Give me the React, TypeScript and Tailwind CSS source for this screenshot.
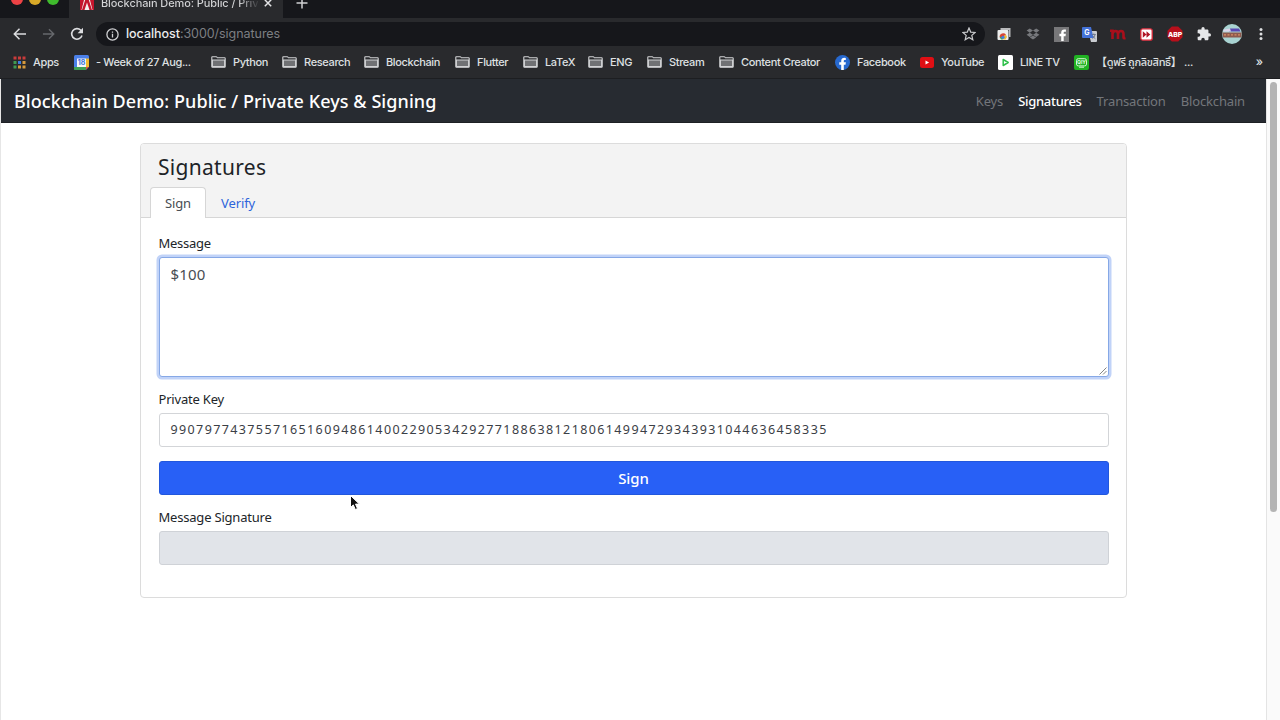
import React from 'react';
import { clsx } from 'clsx';

interface Bookmark {
  label: string;
  width: string;
  icon: React.ReactNode;
}

const FolderIcon = () => (
  <svg viewBox="0 0 15 12" className="h-3 w-[15px]" fill="none" stroke="#d2d3d5" strokeWidth="1.1">
    <path d="M.8 10.4V1.4q0-.6.6-.6h3.8q.5 0 .8.5l.4.5h7.2q.6 0 .6.6v8q0 .8-.8.8H1.6q-.8 0-.8-.8Z" />
    <path d="M1.4 4h12.2v6.6H1.4Z" fill="#707174" />
  </svg>
);

const AppsIcon = () => (
  <svg viewBox="0 0 13 13" className="h-[13px] w-[13px]">
    <path fill="#c93b3b" d="M.5.5h3v3h-3zM5 .5h3v3H5zM9.500.5h3v3h-3z" />
    <path fill="#3f9b52" d="M.5 5h3v3h-3zM.5 9.500h3v3h-3z" />
    <path fill="#3d7be0" d="M5 5h3v3H5z" />
    <path fill="#d79a3c" d="M9.500 5h3v3h-3zM5 9.500h3v3H5zM9.500 9.500h3v3h-3z" />
  </svg>
);

const CalendarIcon = () => (
  <svg viewBox="0 0 15 15" className="h-[15px] w-[15px]">
    <rect width="15" height="15" rx="1.500" fill="#4b80e8" />
    <path fill="#f2b92f" d="M12 3.500h3V12h-3z" />
    <path fill="#3fa055" d="M0 12h12v3H1.500Q0 15 0 13.500z" />
    <path fill="#d85140" d="M12 12h3l-3 3z" />
    <path fill="#292a2d" d="M15 12v3h-3z" />
    <path fill="#f5f7fb" d="M3 3.500h9V12H3z" />
    <text x="7.500" y="10.400" textAnchor="middle" fontSize="7" fontWeight="700" fill="#3b72d8" fontFamily="Inter, sans-serif">18</text>
  </svg>
);

const FacebookIcon = () => (
  <svg viewBox="0 0 15 15" className="h-[15px] w-[15px]">
    <circle cx="7.500" cy="7.500" r="7.500" fill="#2769cf" />
    <path fill="#fff" d="M6.200 15V9.800H4.300V7.300h1.900V6c0-2.200 1.300-3.200 3.100-3.200l1.500.1v2.200h-.9c-.9 0-1.100.4-1.100 1v1.200h2.100l-.4 2.500H8.800V15z" />
  </svg>
);

const YoutubeIcon = () => (
  <svg viewBox="0 0 14 11" className="h-[11px] w-[14px]">
    <rect width="14" height="11" rx="2.500" fill="#e00f14" />
    <path fill="#fff" d="M5.500 3.500v4l3.600-2z" />
  </svg>
);

const LineTvIcon = () => (
  <svg viewBox="0 0 15 15" className="h-[15px] w-[15px]">
    <rect width="15" height="15" rx="1.500" fill="#fff" />
    <path d="M5.200 4.500v6l5-3z" fill="none" stroke="#2fc04a" strokeWidth="1.500" strokeLinejoin="round" />
  </svg>
);

const IqiyiIcon = () => (
  <svg viewBox="0 0 15 15" className="h-[15px] w-[15px]">
    <rect width="15" height="15" rx="2" fill="#20b322" />
    <rect x="2.500" y="3.700" width="10" height="7.200" rx="1.800" fill="none" stroke="#d6f5d4" strokeWidth="1" />
    <text x="7.500" y="9.200" textAnchor="middle" fontSize="5" fontWeight="700" fill="#e4fbe3" fontFamily="Inter, sans-serif">QIY</text>
    <path stroke="#d6f5d4" d="M5 12.200h5" />
  </svg>
);

const bookmarks: Bookmark[] = [
  { label: 'Apps', width: 'w-[61px]', icon: <AppsIcon /> },
  { label: '- Week of 27 Aug...', width: 'w-[137px]', icon: <CalendarIcon /> },
  { label: 'Python', width: 'w-[71px]', icon: <FolderIcon /> },
  { label: 'Research', width: 'w-[82px]', icon: <FolderIcon /> },
  { label: 'Blockchain', width: 'w-[91px]', icon: <FolderIcon /> },
  { label: 'Flutter', width: 'w-[68px]', icon: <FolderIcon /> },
  { label: 'LaTeX', width: 'w-[65px]', icon: <FolderIcon /> },
  { label: 'ENG', width: 'w-[59px]', icon: <FolderIcon /> },
  { label: 'Stream', width: 'w-[72px]', icon: <FolderIcon /> },
  { label: 'Content Creator', width: 'w-[116px]', icon: <FolderIcon /> },
  { label: 'Facebook', width: 'w-[85px]', icon: <FacebookIcon /> },
  { label: 'YouTube', width: 'w-[78px]', icon: <YoutubeIcon /> },
  { label: 'LINE TV', width: 'w-[76px]', icon: <LineTvIcon /> },
  { label: '【ดูฟรี ถูกลิขสิทธิ์】 ...', width: 'w-[130px]', icon: <IqiyiIcon /> },
];

const TabStrip = () => (
  <div className="flex h-[18px] bg-[#16171b]">
    <div className="flex w-[69px] gap-[6px] rounded-br-md pl-[11px]">
      <span className="-mt-[7px] h-3 w-3 rounded-full bg-[#ed4245]" />
      <span className="-mt-[7px] h-3 w-3 rounded-full bg-[#d8a928]" />
      <span className="-mt-[7px] h-3 w-3 rounded-full bg-[#3fbb2d]" />
    </div>
    <div className="flex w-[214px] bg-[#292a2d] pl-[11px]">
      <svg viewBox="0 0 14 14" className="-mt-1 h-[14px] w-[14px] shrink-0">
        <rect width="14" height="14" fill="#f3eeee" />
        <path fill="#c4152d" d="M0 0h5L1.500 14H0zM9 0h5v14h-1.500zM5.500 3h3l3.500 11H9.500L7 6.500 4.500 14H2z" />
      </svg>
      <span className="-mt-[5px] ml-[7px] h-4 w-[157px] shrink-0 overflow-hidden bg-gradient-to-r from-[#d5d6d8] from-88% to-[#3a3b3e] bg-clip-text text-[11px] leading-4 font-medium tracking-[-0.100px] whitespace-nowrap text-transparent">
        Blockchain Demo: Public / Priv
      </span>
      <svg viewBox="0 0 8 8" className="-mt-px ml-[6px] h-2 w-2" stroke="#e4e5e7" strokeWidth="1.500">
        <path d="M.8.8l6.400 6.400M7.200.8.800 7.200" />
      </svg>
    </div>
    <svg viewBox="0 0 12 12" className="-mt-[3px] ml-[13px] h-3 w-3" stroke="#d0d1d3" strokeWidth="1.500">
      <path d="M6 .5v11M.5 6h11" />
    </svg>
  </div>
);

const Extensions = () => (
  <div className="grid w-[285px] grid-cols-10 place-items-center">
    <svg viewBox="0 0 14 14" className="h-[14px] w-[14px]">
      <path fill="#b9babc" d="M3.500 1h10v9H12V3H3.500z" />
      <rect x=".5" y="3" width="11" height="10" rx="1" fill="#eceded" />
      <path fill="#d64534" d="M2.500 10a3.700 3.700 0 0 1 6.500-2.500L6 10z" />
      <path fill="#45a156" d="M2.500 10l1.500 2.500H6V10z" />
      <path fill="#f0bb35" d="M8.800 7.500L10 10l-1.500 2.500H6V10z" />
      <circle cx="6" cy="10.300" r="1.600" fill="#3f7be0" />
    </svg>
    <svg viewBox="0 0 14 12" className="h-3 w-[14px]" fill="#77797d">
      <path d="M3.800.5 7 2.600 3.800 4.700.6 2.600zM10.200.5l3.200 2.100-3.200 2.100L7 2.600zM3.800 4.700 7 6.800 3.800 8.900.6 6.800zM10.200 4.700l3.200 2.100-3.200 2.100L7 6.800zM3.800 9.500 7 7.500l3.200 2L7 11.500z" />
    </svg>
    <svg viewBox="0 0 15 15" className="h-[15px] w-[15px]">
      <rect width="15" height="15" fill="#777779" />
      <path fill="#fff" d="M7.200 14V9.200H5.400V6.700h1.800V5.500c0-2.100 1.200-3.100 3-3.100h1.700v2.300h-1.100c-.9 0-1.100.4-1.100 1v1h2.200l-.4 2.500H9.700V14z" />
    </svg>
    <svg viewBox="0 0 15 15" className="h-[15px] w-[15px]">
      <path fill="#c9ccd1" d="M6 4h8q1 0 1 1v9q0 1-1 1H9z" />
      <path fill="#4472d8" d="M1 0h8l2.500 11H1q-1 0-1-1V1q0-1 1-1z" />
      <text x="4.800" y="8" textAnchor="middle" fontSize="7" fontWeight="700" fill="#fff" fontFamily="Inter, sans-serif">G</text>
      <path d="M9.800 7.500h4M11.800 6.500v1M13 7.700q-.6 2.800-2.600 4M11 9q.8 1.800 2.400 2.800" stroke="#68758b" strokeWidth=".9" fill="none" />
    </svg>
    <svg viewBox="0 0 16 11" className="h-[11px] w-4" fill="none" stroke="#a80f1b" strokeWidth="2.600">
      <path d="M0 1.800h2.500V10M2.500 5Q3 2 5.500 2T8 5v5M8 5q.5-3 3-3t2.500 3v3.500q0 1 2 .5" />
    </svg>
    <svg viewBox="0 0 13 13" className="h-[13px] w-[13px]">
      <rect x=".8" y=".8" width="11.400" height="11.400" rx="2" fill="#fff" stroke="#d92938" strokeWidth="1.300" />
      <path fill="#b01525" d="M2.800 3.300 6.500 6.500l-3.700 3.200zM6.500 3.300l3.800 3.200-3.800 3.200z" />
    </svg>
    <svg viewBox="0 0 16 16" className="h-4 w-4">
      <path fill="#b80f1b" d="M4.800.5h6.400l4.300 4.300v6.400l-4.300 4.300H4.800L.5 11.200V4.800z" />
      <text x="8" y="10.600" textAnchor="middle" fontSize="6.800" fontWeight="800" fill="#fff" fontFamily="Inter, sans-serif">ABP</text>
    </svg>
    <svg viewBox="1 1 22 22" className="h-[14px] w-[14px]" fill="#e6e7e9">
      <path d="M20.500 11H19V7c0-1.100-.9-2-2-2h-4V3.500a2.500 2.500 0 0 0-5 0V5H4c-1.100 0-2 .9-2 2v3.800h1.500a2.700 2.700 0 0 1 0 5.400H2V20c0 1.100.9 2 2 2h3.800v-1.500a2.700 2.700 0 0 1 5.400 0V22H17c1.100 0 2-.9 2-2v-4h1.500a2.500 2.500 0 0 0 0-5z" />
    </svg>
    <svg viewBox="0 0 20 20" className="h-5 w-5">
      <circle cx="10" cy="10" r="10" fill="#a9d3d2" />
      <path fill="#5a48b4" d="M8 4.500h9l1.500 3H7z" />
      <path fill="#ddd4ea" d="M2 5.500l6-1 1 3H1z" />
      <path fill="#8d5a4e" d="M.3 8.500h19.400l-.4 5H1z" />
      <path stroke="#d88e67" strokeWidth="1.200" strokeDasharray="2 1.500" d="M2 10.800h16" />
    </svg>
    <svg viewBox="0 0 4 14" className="h-[14px] w-1" fill="#dedfe1">
      <circle cx="2" cy="2.500" r="1.500" />
      <circle cx="2" cy="7" r="1.500" />
      <circle cx="2" cy="11.500" r="1.500" />
    </svg>
  </div>
);

const Toolbar = () => (
  <div className="flex h-8 items-center pl-[13px]">
    <svg viewBox="0 0 14 12" className="h-3 w-[14px]" fill="none" stroke="#dcdde0" strokeWidth="1.500">
      <path d="M13 6H1.500M6.500.8 1.300 6l5.200 5.200" />
    </svg>
    <svg viewBox="0 0 14 12" className="ml-[15px] h-3 w-[13px]" fill="none" stroke="#66686c" strokeWidth="1.500">
      <path d="M1 6h11.500M7.500.8 12.700 6l-5.200 5.200" />
    </svg>
    <svg viewBox="0 0 14 14" className="ml-[15px] h-[14px] w-[14px]" fill="none" stroke="#dcdde0" strokeWidth="1.600">
      <path d="M12 8.600A5.300 5.300 0 1 1 10.800 3.200L12 4.500" />
      <path d="M13 .8v5.400H7.600z" fill="#dcdde0" stroke="none" />
    </svg>
    <div className="ml-[12px] flex h-6 w-[889px] items-center rounded-full bg-[#16171b] pr-[9px] pl-[10px]">
      <svg viewBox="0 0 13 13" className="h-[13px] w-[13px]" fill="none" stroke="#d0d1d3" strokeWidth="1.300">
        <circle cx="6.500" cy="6.500" r="5.600" />
        <path d="M6.500 5.800v3.700M6.500 3.400v1.300" />
      </svg>
      <span className="ml-[7px] text-[12.500px] leading-4 tracking-[-0.050px] text-[#7d7f83]">
        <span className="font-medium text-[#e9eaec]">localhost</span>:3000/signatures
      </span>
      <svg viewBox="0 0 14 14" className="ml-auto h-[14px] w-[14px]" fill="none" stroke="#c9cacc" strokeWidth="1.200">
        <path d="m7 1 1.700 4.100 4.400.4-3.300 2.900 1 4.300L7 10.400l-3.800 2.300 1-4.300L.9 5.500l4.400-.4z" />
      </svg>
    </div>
    <div className="ml-[5px]">
      <Extensions />
    </div>
  </div>
);

const BookmarkBar = () => (
  <div className="flex h-[29px] items-center border-b border-[#1d1e21] pb-1 pl-[13px]">
    {bookmarks.map((item) => (
      <div key={item.label} className={clsx('flex shrink-0 items-center gap-[7px] whitespace-nowrap', item.width)}>
        {item.icon}
        <span className="text-[11px] leading-4 font-medium tracking-[-0.350px] text-[#dfe0e2]">{item.label}</span>
      </div>
    ))}
    <span className="mr-[17px] ml-auto text-[12px] leading-4 font-medium text-[#dfe0e2]">»</span>
  </div>
);

const Navbar = () => (
  <nav className="flex h-[44px] items-center justify-between border-b border-[#1d2024] bg-[#272b31] pr-[21px] pl-[13px]">
    <a className="text-[18px] leading-6 font-medium tracking-[0.070px] text-white">Blockchain Demo: Public / Private Keys &amp; Signing</a>
    <div className="flex gap-[15px] text-[13px] leading-5 tracking-[-0.150px] text-[#73767b]">
      <a>Keys</a>
      <a className="font-medium tracking-[-0.300px] text-white">Signatures</a>
      <a>Transaction</a>
      <a>Blockchain</a>
    </div>
  </nav>
);

const SignatureCard = () => (
  <div className="mt-5 ml-[139px] h-[455px] w-[987px] rounded-[4px] border border-[#dcdcdc] bg-white">
    <div className="h-[74px] rounded-t-[3px] border-b border-[#d6d6d6] bg-[#f3f3f3] pt-[7px] pl-[9px]">
      <h4 className="pl-2 text-[21px] leading-8 tracking-[0.300px] text-[#202327]">Signatures</h4>
      <ul className="mt-[4px] flex text-[13px] leading-5 tracking-[-0.100px]">
        <li className="flex h-[31px] w-[56px] items-center justify-center rounded-t-[4px] border border-b-0 border-[#d6d6d6] bg-white text-[#484d53]">Sign</li>
        <li className="flex h-[31px] items-center pl-[15px] text-[#2e65db]">Verify</li>
      </ul>
    </div>
    <form className="px-[17.500px] pt-[15px] text-[13px] text-[#212529]">
      <label className="block h-6 leading-5 tracking-[-0.250px]">Message</label>
      <div className="relative h-[120px] rounded-[3px] border border-[#86a8e6] bg-white px-[11px] pt-[5px] text-[15px] leading-[22px] tracking-[0.200px] text-[#484d53] shadow-[0_0_0_2.500px_#c1d3f8]">
        $100
        <svg viewBox="0 0 8 8" className="absolute right-px bottom-px h-2 w-2" stroke="#777" strokeWidth=".9">
          <path d="M.5 7.500l7-7M4 7.500 7.500 4" />
        </svg>
      </div>
      <label className="mt-3 block h-6 leading-5 tracking-[-0.200px]">Private Key</label>
      <div className="flex h-[34px] items-center rounded-[3px] border border-[#d3d5d8] pl-[11px] text-[12.500px] tracking-[1.385px] text-[#3b4046]">
        99079774375571651609486140022905342927718863812180614994729343931044636458335
      </div>
      <button type="button" className="mt-[14px] block h-[34px] w-full rounded-[3px] border border-[#2257dc] bg-[#2860f6] text-[15px] leading-5 font-medium tracking-[-0.100px] text-white">
        Sign
      </button>
      <label className="mt-3 block h-6 leading-5 tracking-[-0.200px]">Message Signature</label>
      <div className="h-[34px] rounded-[3px] border border-[#cfd2d7] bg-[#e1e4e9]" />
    </form>
  </div>
);

export default function App() {
  return (
    <div className="relative h-[720px] w-[1280px] overflow-hidden bg-white">
      <header className="bg-[#292a2d] font-[Inter,'Noto_Sans_Thai','Noto_Sans_CJK_JP',sans-serif]">
        <TabStrip />
        <Toolbar />
        <BookmarkBar />
      </header>
      <div className="flex h-[641px] border-l border-[#e6e6e6] font-['Noto_Sans',sans-serif]">
        <main className="w-[1265px]">
          <Navbar />
          <SignatureCard />
        </main>
        <div className="w-[14px] border-l border-[#e4e4e4] bg-[#fafafa] pt-[3px] pl-[3px]">
          <div className="h-[430px] w-[7px] rounded-full bg-[#b4b4b4]" />
        </div>
      </div>
      <svg viewBox="0 0 12 18" className="absolute top-[494px] left-[349px] h-[18px] w-3">
        <path d="M1.500 1.500v12l2.800-2.600 2 4.600 2.200-.9-2-4.500h3.900z" fill="#111" stroke="#fff" strokeWidth="1" />
      </svg>
    </div>
  );
}
